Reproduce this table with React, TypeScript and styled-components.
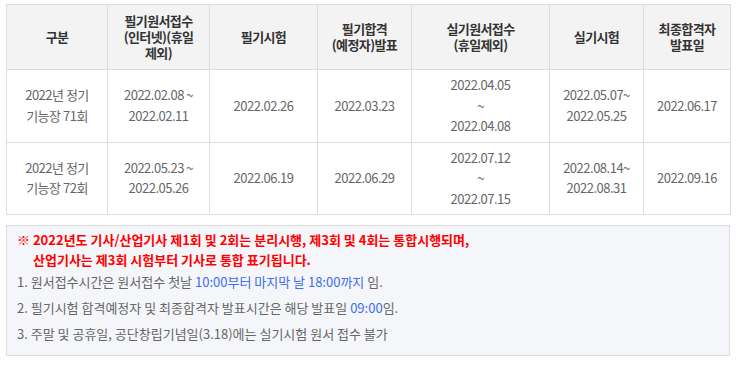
import React from "react";
import styled, { createGlobalStyle } from "styled-components";

const GlobalStyle = createGlobalStyle`
  body {
    margin: 0;
    padding: 4px 8px 0 6px;
    background: #fff;
    font-family: "Noto Sans CJK KR", "Noto Sans", sans-serif;
  }
`;

const Wrap = styled.div`
  width: 724px;
`;

const Table = styled.table`
  width: 724px;
  border-collapse: collapse;
  table-layout: fixed;
  border: 1px solid #dddddd;
`;

const Col = styled.col<{ $w: number }>`
  width: ${(p) => p.$w}px;
`;

const HeadRow = styled.tr`
  height: 65px;
  background: #f3f3f3;
`;

const BodyRow = styled.tr`
  height: 72px;
`;

const Th = styled.th`
  border: 1px solid #dddddd;
  padding: 0 2px;
  font-size: 13px;
  font-weight: 700;
  line-height: 16px;
  color: #333;
  letter-spacing: -0.6px;
  text-align: center;
  vertical-align: middle;
`;

const Td = styled.td`
  border: 1px solid #dddddd;
  padding: 5px 2px;
  font-size: 13px;
  line-height: 20.5px;
  color: #666;
  letter-spacing: -0.5px;
  text-align: center;
  vertical-align: middle;
`;

const Notice = styled.div`
  margin-top: 10px;
  border: 1px solid #dddddd;
  background: #f5f6fa;
  padding: 4px 10px 11px;
  font-size: 13px;
`;

const Warn = styled.p`
  margin: 0 0 2px;
  padding-left: 16px;
  text-indent: -16px;
  color: #ff0000;
  font-weight: 700;
  line-height: 20px;
`;

const Items = styled.ol`
  margin: 0;
  padding: 0;
  list-style: none;
  display: flex;
  flex-direction: column;
  gap: 6px;
`;

const Item = styled.li`
  color: #666;
  line-height: 20px;
`;

const Em = styled.span`
  color: #3a6cf4;
`;

const columns = [
  { w: 101, label: ["구분"] },
  { w: 102, label: ["필기원서접수", "(인터넷)(휴일", "제외)"] },
  { w: 108, label: ["필기시험"] },
  { w: 94, label: ["필기합격", "(예정자)발표"] },
  { w: 138, label: ["실기원서접수", "(휴일제외)"] },
  { w: 94, label: ["실기시험"] },
  { w: 87, label: ["최종합격자", "발표일"] },
];

const rows = [
  [
    ["2022년 정기", "기능장 71회"],
    ["2022.02.08 ~", "2022.02.11"],
    ["2022.02.26"],
    ["2022.03.23"],
    ["2022.04.05", "~", "2022.04.08"],
    ["2022.05.07~", "2022.05.25"],
    ["2022.06.17"],
  ],
  [
    ["2022년 정기", "기능장 72회"],
    ["2022.05.23 ~", "2022.05.26"],
    ["2022.06.19"],
    ["2022.06.29"],
    ["2022.07.12", "~", "2022.07.15"],
    ["2022.08.14~", "2022.08.31"],
    ["2022.09.16"],
  ],
];

const Lines = ({ lines }: { lines: string[] }) => (
  <>
    {lines.map((l, i) => (
      <React.Fragment key={i}>
        {i > 0 && <br />}
        {l}
      </React.Fragment>
    ))}
  </>
);

export default function App() {
  return (
    <Wrap>
      <GlobalStyle />
      <Table>
        <colgroup>
          {columns.map((c, i) => (
            <Col key={i} $w={c.w} />
          ))}
        </colgroup>
        <thead>
          <HeadRow>
            {columns.map((c, i) => (
              <Th key={i}>
                <Lines lines={c.label} />
              </Th>
            ))}
          </HeadRow>
        </thead>
        <tbody>
          {rows.map((r, i) => (
            <BodyRow key={i}>
              {r.map((cell, j) => (
                <Td key={j}>
                  <Lines lines={cell} />
                </Td>
              ))}
            </BodyRow>
          ))}
        </tbody>
      </Table>
      <Notice>
        <Warn>
          ※ 2022년도 기사/산업기사 제1회 및 2회는 분리시행, 제3회 및 4회는 통합시행되며,
          <br />
          산업기사는 제3회 시험부터 기사로 통합 표기됩니다.
        </Warn>
        <Items>
          <Item>
            1. 원서접수시간은 원서접수 첫날 <Em>10:00부터 마지막 날 18:00까지</Em> 임.
          </Item>
          <Item>
            2. 필기시험 합격예정자 및 최종합격자 발표시간은 해당 발표일 <Em>09:00</Em>임.
          </Item>
          <Item>3. 주말 및 공휴일, 공단창립기념일(3.18)에는 실기시험 원서 접수 불가</Item>
        </Items>
      </Notice>
    </Wrap>
  );
}
